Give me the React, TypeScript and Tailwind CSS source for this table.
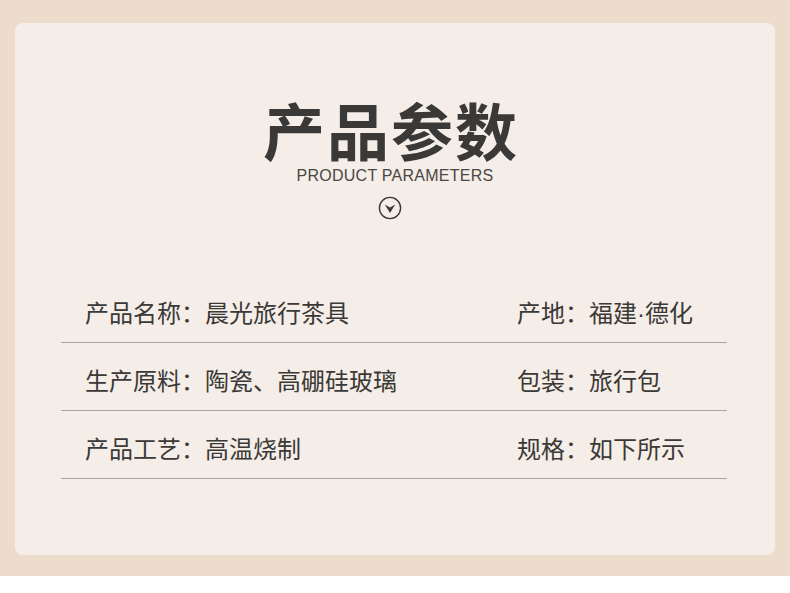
import React from 'react';

const rows = [
  { left: '产品名称：晨光旅行茶具', right: ['产地：福建', '德化'] },
  { left: '生产原料：陶瓷、高硼硅玻璃', right: ['包装：旅行包'] },
  { left: '产品工艺：高温烧制', right: ['规格：如下所示'] },
];

const cjk = { fontFamily: '"Noto Sans CJK SC", "Noto Sans", sans-serif' };

export default function App() {
  return (
    <div className="w-[790px] h-[593px] bg-white overflow-hidden">
      <div className="h-[576px] bg-[#eddccb] pt-[23px] px-[15px]">
        <div className="h-[532px] rounded-[8px] bg-[#f4ede8] flex flex-col items-center pt-[75px]">
          {/* Title */}
          <h1
            className="mr-[8px] text-[62px] leading-[62px] tracking-[2px] font-bold text-[#3a3937]"
            style={cjk}
          >
            产品参数
          </h1>
          <p
            className="mt-[8px] text-[16px] leading-[16px] tracking-[0.25px] text-[#4a4744]"
            style={{ fontFamily: '"Liberation Sans", Arial, sans-serif' }}
          >
            PRODUCT PARAMETERS
          </p>
          <svg className="mt-[12px] mr-[11px]" width="24" height="24" viewBox="0 0 24 24">
            <circle cx="12" cy="12" r="10.6" fill="none" stroke="#3a3937" strokeWidth="1.4" />
            <path d="M6.8 8.6 L12 17 L17.2 8.6 L12 11.6 Z" fill="#3a3937" />
          </svg>

          {/* Parameter table */}
          <div className="mt-[55px] w-full pl-[46px] pr-[48px]">
            {rows.map((r) => (
              <div
                key={r.left}
                className="grid grid-cols-[432px_1fr] h-[68px] pl-[24px] pt-[19px] border-b border-[#aba49e] text-[24px] leading-[36px] text-[#3b3936]"
                style={cjk}
              >
                <span>{r.left}</span>
                <span>
                  {r.right[0]}
                  {r.right[1] && (
                    <>
                      <span
                        className="leading-none"
                        style={{ fontFamily: '"Liberation Sans", Arial, sans-serif' }}
                      >
                        ·
                      </span>
                      {r.right[1]}
                    </>
                  )}
                </span>
              </div>
            ))}
          </div>
        </div>
      </div>
    </div>
  );
}
